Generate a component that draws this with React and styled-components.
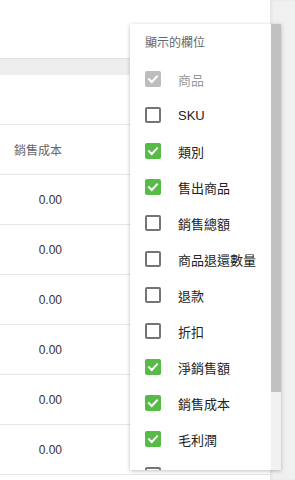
import React from 'react'
import styled, { createGlobalStyle } from 'styled-components'

const GlobalStyle = createGlobalStyle`
    html, body {
        margin: 0;
        padding: 0;
        height: 480px;
        overflow: hidden;
        background: #ffffff;
        font-family: "Liberation Sans", "Noto Sans CJK TC", sans-serif;
    }
`

const columns = [
    { label: '商品', checked: true, disabled: true },
    { label: 'SKU', checked: false },
    { label: '類別', checked: true },
    { label: '售出商品', checked: true },
    { label: '銷售總額', checked: false },
    { label: '商品退還數量', checked: false },
    { label: '退款', checked: false },
    { label: '折扣', checked: false },
    { label: '淨銷售額', checked: true },
    { label: '銷售成本', checked: true },
    { label: '毛利潤', checked: true },
    { label: '利潤率', checked: false },
]

const rows = ['0.00', '0.00', '0.00', '0.00', '0.00', '0.00']

function CheckBox({ checked, disabled }) {
    return (
        <Box $checked={checked} $disabled={disabled}>
            {checked && (
                <svg width="12" height="12" viewBox="0 0 12 12">
                    <path d="M2 6.2 L4.8 9 L10 3.4" fill="none" stroke="#fff" strokeWidth="2" strokeLinecap="square" />
                </svg>
            )}
        </Box>
    )
}

function App() {
    return (
        <Page>
            <GlobalStyle />
            <Main>
                <Toolbar />
                <Band />
                <FilterRow />
                <Table>
                    <HeaderRow>
                        <Cell $head>銷售成本</Cell>
                    </HeaderRow>
                    {rows.map((v, i) => (
                        <Row key={i}>
                            <Cell>{v}</Cell>
                        </Row>
                    ))}
                </Table>
            </Main>
            <SideStrip />
            <Popup>
                <Menu>
                    <Title>顯示的欄位</Title>
                    {columns.map((c) => (
                        <Item key={c.label} $disabled={c.disabled}>
                            <CheckBox checked={c.checked} disabled={c.disabled} />
                            <span>{c.label}</span>
                        </Item>
                    ))}
                </Menu>
                <ScrollTrack>
                    <Thumb style={{ height: `${(368 / 446) * 100}%` }} />
                </ScrollTrack>
            </Popup>
        </Page>
    )
}

export default App

const Page = styled.div`
    position: relative;
    display: flex;
    width: 295px;
    height: 480px;
    overflow: hidden;
`

const Main = styled.div`
    width: 270px;
    flex: none;
    display: flex;
    flex-direction: column;
    background: #fff;
`

const Toolbar = styled.div`
    height: 58px;
`

const Band = styled.div`
    height: 16px;
    background: #eeeeee;
    border-top: 1px solid #e2e2e2;
`

const FilterRow = styled.div`
    height: 49px;
    border-bottom: 1px solid #e6e6e6;
`

const Table = styled.div`
    display: flex;
    flex-direction: column;
`

const Row = styled.div`
    height: 49px;
    display: flex;
    align-items: center;
    border-bottom: 1px solid #e6e6e6;
`

const HeaderRow = styled(Row)``

const Cell = styled.div`
    width: 62px;
    text-align: right;
    font-size: 12px;
    color: ${(p) => (p.$head ? '#666' : '#333')};
`

const SideStrip = styled.div`
    flex: 1;
    background: #f0f0f0;
    box-shadow: inset 2px 0 3px rgba(0, 0, 0, 0.05);
`

const Popup = styled.div`
    position: absolute;
    left: 130px;
    top: 24px;
    width: 151px;
    height: 446px;
    display: flex;
    background: #fff;
    box-shadow: 0 1px 4px rgba(0, 0, 0, 0.25);
`

const Menu = styled.div`
    flex: 1;
    overflow: hidden;
`

const Title = styled.div`
    height: 37px;
    box-sizing: border-box;
    padding: 11px 15px 0;
    line-height: 16px;
    font-size: 12px;
    color: #666;
`

const Item = styled.div`
    height: 36px;
    display: flex;
    align-items: center;
    gap: 17px;
    padding-left: 15px;
    font-size: 13px;
    color: ${(p) => (p.$disabled ? '#999' : '#222')};
    white-space: nowrap;
`

const Box = styled.div`
    width: 16px;
    height: 16px;
    box-sizing: border-box;
    flex: none;
    border-radius: 2px;
    display: flex;
    align-items: center;
    justify-content: center;
    background: ${(p) => (p.$disabled ? '#bdbdbd' : p.$checked ? '#58bb48' : '#fff')};
    border: ${(p) => (p.$checked ? 'none' : '2px solid #757575')};
`

const ScrollTrack = styled.div`
    width: 10px;
    flex: none;
    background: #f1f1f1;
`

const Thumb = styled.div`
    background: #c1c1c1;
`
